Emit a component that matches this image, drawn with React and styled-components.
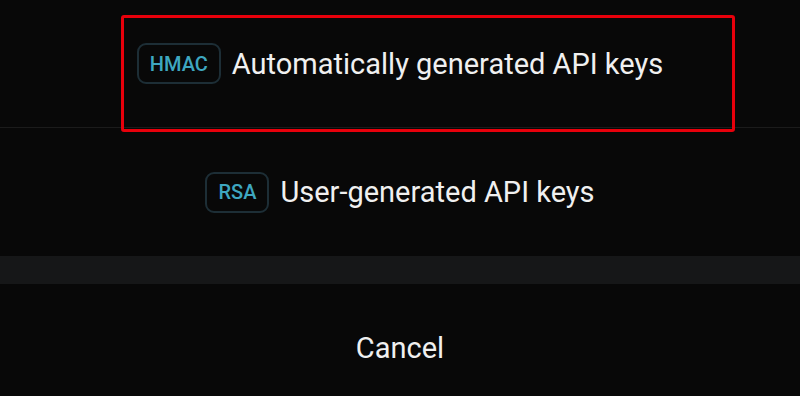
import React from "react";
import styled, { createGlobalStyle } from "styled-components";

const GlobalStyle = createGlobalStyle`
  html, body {
    margin: 0;
    padding: 0;
    background: #080808;
  }
  body {
    font-family: Roboto, "Noto Sans", sans-serif;
  }
`;

const SheetStyles = styled.div`
  width: 800px;
  height: 396px;
  overflow: hidden;
  background: #080808;
  display: flex;
  flex-direction: column;
  & > * {
    flex-shrink: 0;
  }
`;

const Option = styled.div`
  position: relative;
  height: 128px;
  display: flex;
  align-items: center;
  justify-content: center;
  gap: 11px;
  border-bottom: ${(props) => (props.$divider ? "1px solid #1b1b1b" : "none")};
  box-sizing: border-box;
`;

const Badge = styled.span`
  display: inline-flex;
  align-items: center;
  justify-content: center;
  height: 41px;
  padding: 0 11px;
  box-sizing: border-box;
  border: 2px solid #1d2e36;
  border-radius: 9px;
  color: #3ea7c0;
  font-size: 20px;
  font-weight: 500;
`;

const Label = styled.span`
  color: #f0f0f0;
  font-size: 29px;
`;

const Highlight = styled.div`
  position: absolute;
  left: 121px;
  top: 15px;
  width: 614px;
  height: 117px;
  box-sizing: border-box;
  border: 3px solid #e8000b;
  border-radius: 3px;
  pointer-events: none;
`;

const Gap = styled.div`
  height: 28px;
  background: #161718;
`;

const CancelRow = styled.div`
  height: 128px;
  display: flex;
  align-items: center;
  justify-content: center;
  color: #f0f0f0;
  font-size: 29px;
`;

const App = () => {
  return (
    <SheetStyles>
      <GlobalStyle />
      <Option $divider>
        <Badge>HMAC</Badge>
        <Label>Automatically generated API keys</Label>
        <Highlight />
      </Option>
      <Option>
        <Badge>RSA</Badge>
        <Label>User-generated API keys</Label>
      </Option>
      <Gap />
      <CancelRow>Cancel</CancelRow>
    </SheetStyles>
  );
};

export default App;
